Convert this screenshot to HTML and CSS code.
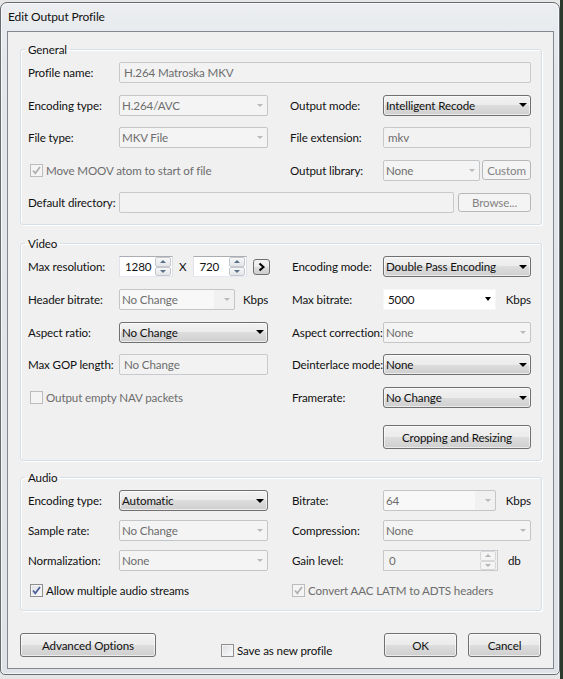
FILE: index.html
```html
<!DOCTYPE html>
<html>
  <head>
    <link rel="stylesheet" href="styles.css">
  </head>
  <body>
    <div class="window">
      <div class="titlebar">Edit Output Profile</div>
      <div class="client">

        <fieldset class="group general">
          <legend>General</legend>
          <div class="grid">
            <span class="label">Profile name:</span>
            <div class="text off span3">H.264 Matroska MKV</div>

            <span class="label">Encoding type:</span>
            <div class="combo off half">H.264/AVC</div>
            <span class="label right">Output mode:</span>
            <div class="combo">Intelligent Recode</div>

            <span class="label">File type:</span>
            <div class="combo off half">MKV File</div>
            <span class="label right">File extension:</span>
            <div class="text off">mkv</div>

            <div class="check off span2">
              <span class="box"><svg width="11" height="11" viewBox="0 0 11 11"><path d="M2 5.5 L4.3 8.3 L9 2"/></svg></span>
              Move MOOV atom to start of file
            </div>
            <span class="label right">Output library:</span>
            <div class="pair">
              <div class="combo off lib">None</div>
              <div class="btn off small">Custom</div>
            </div>

            <span class="label">Default directory:</span>
            <div class="pair span3">
              <div class="text off grow"></div>
              <div class="btn off browse">Browse...</div>
            </div>
          </div>
        </fieldset>

        <fieldset class="group video">
          <legend>Video</legend>
          <div class="grid">
            <span class="label">Max resolution:</span>
            <div class="res">
              <div class="spin">1280<span class="arrows"><i class="up"></i><i class="down"></i></span></div>
              <span class="times">X</span>
              <div class="spin">720<span class="arrows"><i class="up"></i><i class="down"></i></span></div>
              <div class="go"><svg width="9" height="10" viewBox="0 0 9 10"><path d="M2.5 1.5 L6.5 5 L2.5 8.5"/></svg></div>
            </div>
            <span class="label right">Encoding mode:</span>
            <div class="combo">Double Pass Encoding</div>

            <span class="label">Header bitrate:</span>
            <div class="unit-row">
              <div class="combo off edit hdr">No Change</div>
              <span class="unit near">Kbps</span>
            </div>
            <span class="label right">Max bitrate:</span>
            <div class="unit-row">
              <div class="ecombo">5000</div>
              <span class="unit">Kbps</span>
            </div>

            <span class="label">Aspect ratio:</span>
            <div class="combo half">No Change</div>
            <span class="label right">Aspect correction:</span>
            <div class="combo off">None</div>

            <span class="label">Max GOP length:</span>
            <div class="text off half">No Change</div>
            <span class="label right">Deinterlace mode:</span>
            <div class="combo">None</div>

            <div class="check off span2">
              <span class="box"></span>
              Output empty NAV packets
            </div>
            <span class="label right">Framerate:</span>
            <div class="combo">No Change</div>

            <div class="btn crop">Cropping and Resizing</div>
          </div>
        </fieldset>

        <fieldset class="group audio">
          <legend>Audio</legend>
          <div class="grid">
            <span class="label">Encoding type:</span>
            <div class="combo half">Automatic</div>
            <span class="label right">Bitrate:</span>
            <div class="unit-row">
              <div class="combo off edit wide">64</div>
              <span class="unit">Kbps</span>
            </div>

            <span class="label">Sample rate:</span>
            <div class="combo off half">No Change</div>
            <span class="label right">Compression:</span>
            <div class="combo off">None</div>

            <span class="label">Normalization:</span>
            <div class="combo off half">None</div>
            <span class="label right">Gain level:</span>
            <div class="unit-row">
              <div class="spin off wide">0<span class="arrows"><i class="up"></i><i class="down"></i></span></div>
              <span class="unit">db</span>
            </div>

            <div class="check span2">
              <span class="box"><svg width="11" height="11" viewBox="0 0 11 11"><path d="M2 5.5 L4.3 8.3 L9 2"/></svg></span>
              Allow multiple audio streams
            </div>
            <div class="check off span2 right">
              <span class="box"><svg width="11" height="11" viewBox="0 0 11 11"><path d="M2 5.5 L4.3 8.3 L9 2"/></svg></span>
              Convert AAC LATM to ADTS headers
            </div>
          </div>
        </fieldset>

        <div class="footer">
          <div class="btn advanced">Advanced Options</div>
          <div class="check save">
            <span class="box"></span>
            Save as new profile
          </div>
          <div class="btn ok">OK</div>
          <div class="btn cancel">Cancel</div>
        </div>

      </div>
    </div>
  </body>
</html>
```

FILE: styles.css
```css
html, body {
  margin: 0;
  height: 679px;
  overflow: hidden;
}

body {
  font-family: Lato, "Liberation Sans", sans-serif;
  font-size: 11.6px;
  letter-spacing: -0.12px;
  color: #111;
  background: linear-gradient(to right, #e6e6e6 560px, #2b3a2c 560px);
}

* {
  box-sizing: border-box;
}

/* window frame */

.window {
  width: 560px;
  height: 673px;
  margin-top: 2px;
  border: 1px solid #686b70;
  border-radius: 7px 7px 5px 5px;
  padding: 0 5px 5px 6px;
  background: linear-gradient(#eceef1, #e3e7eb 60px, #dfe3e7);
  box-shadow: inset 0 0 0 1px rgba(255, 255, 255, 0.7);
}

.titlebar {
  height: 28px;
  line-height: 28px;
  padding-left: 1px;
  font-size: 12px;
}

.client {
  height: 638px;
  border: 1px solid #828790;
  background: #f0f0f0;
  padding: 10px 11px 11px 12px;
}

/* group boxes */

.group {
  margin: 0;
  padding: 5px 10px 11px 7px;
  min-width: 0;
  border: 1px solid #d5dfe5;
  border-radius: 3px;
  box-shadow: inset 1px 1px 0 #fff, 1px 1px 0 #fff;
}

.group legend {
  padding: 0 3px;
  margin-left: -3px;
  line-height: 15px;
}

.video {
  margin-top: 11px;
}

.audio {
  margin-top: 9px;
  padding-bottom: 9px;
}

.grid {
  display: grid;
  grid-template-columns: 91px 170px 94px 148px;
  grid-auto-rows: 21px;
  align-items: center;
}

.general .grid {
  row-gap: 11.5px;
}

.video .grid {
  row-gap: 11.75px;
  grid-template-rows: repeat(5, 21px) 29.25px;
}

.audio .grid {
  row-gap: 9px;
}

.label {
  white-space: nowrap;
}

.general .label.right {
  padding-left: 1px;
}

.video .label.right,
.audio .label.right,
.audio .check.right {
  padding-left: 3px;
}

.span2 {
  grid-column: span 2;
}

.span3 {
  grid-column: span 3;
}

.half {
  width: 149px;
}

.pair {
  display: flex;
  align-items: center;
  gap: 2px;
}

.pair .grow {
  flex: 1;
}

.pair .browse {
  width: 73px;
  height: 19px;
  margin-left: 2px;
}

.pair .lib {
  width: 97px;
}

.pair .small {
  width: 49px;
  height: 20px;
}

/* controls */

.combo,
.ecombo,
.text,
.spin {
  display: flex;
  align-items: center;
  height: 21px;
  white-space: nowrap;
  overflow: hidden;
}

.combo {
  border: 1px solid #707070;
  border-radius: 3px;
  padding-left: 2px;
  background: linear-gradient(#f2f2f2, #ebebeb 50%, #dddddd 50%, #cfcfcf);
  box-shadow: inset 0 0 0 1px rgba(255, 255, 255, 0.6);
}

.combo::after,
.ecombo::after {
  content: "";
  margin-left: auto;
  margin-right: 3px;
  border-left: 4px solid transparent;
  border-right: 4px solid transparent;
  border-top: 4px solid #000;
}

.combo.off {
  border-color: #c3c6c9;
  border-radius: 2px;
  background: #f4f4f4;
  box-shadow: none;
  color: #6d6d6d;
}

.combo.off::after {
  margin-right: 4px;
  border-left-width: 3.5px;
  border-right-width: 3.5px;
  border-top: 3.5px solid #b9b9b9;
}

.combo.edit {
  background: linear-gradient(to right, #f8f8f8 calc(100% - 20px), #f1f1f1 calc(100% - 20px));
}

.combo.hdr {
  width: 116px;
}

.combo.wide,
.spin.wide,
.ecombo {
  width: 115px;
}

.ecombo {
  background: #fff;
  border: 1px solid #f7f7f7;
  padding-left: 4px;
}

.ecombo::after {
  margin-right: 4px;
  border-left-width: 3.5px;
  border-right-width: 3.5px;
}

.text {
  border: 1px solid #abadb3;
  border-radius: 2px;
  padding-left: 4px;
  background: #fff;
}

.text.off {
  border-color: #c7c9cc;
  background: #f2f2f2;
  color: #6d6d6d;
}

.unit-row {
  display: flex;
  align-items: center;
}

.unit {
  margin-left: 10px;
}

.unit.near {
  margin-left: 8px;
}

.res {
  display: flex;
  align-items: center;
}

.times {
  margin: 0 7px 0 6px;
}

.spin {
  width: 54px;
  padding: 0 1px 0 5px;
  border: 1px solid;
  border-color: #abadb3 #dbdfe6 #e3e9ef #e2e3ea;
  background: #fff;
}

.spin .arrows {
  margin-left: auto;
  display: flex;
  flex-direction: column;
  width: 16px;
  height: 19px;
}

.spin .arrows i {
  flex: 1;
  display: flex;
  align-items: center;
  justify-content: center;
  border: 1px solid #c5c9cf;
  border-radius: 2px;
  background: linear-gradient(#f7f7f7, #e3e5e8);
}

.spin .arrows i::before {
  content: "";
  border-left: 3px solid transparent;
  border-right: 3px solid transparent;
}

.spin .arrows .up::before {
  border-bottom: 3px solid #5b6f88;
}

.spin .arrows .down::before {
  border-top: 3px solid #5b6f88;
}

.spin.off {
  border-color: #c7c9cc;
  background: #f2f2f2;
  color: #6d6d6d;
}

.spin.off .arrows i {
  border-color: #d6d8da;
  background: #f4f4f4;
}

.spin.off .arrows .up::before {
  border-bottom-color: #b4b4b4;
}

.spin.off .arrows .down::before {
  border-top-color: #b4b4b4;
}

.go {
  margin-left: 6px;
  width: 17px;
  height: 16px;
  display: flex;
  align-items: center;
  justify-content: center;
  border: 1px solid #707070;
  border-radius: 3px;
  background: linear-gradient(#f2f2f2, #ebebeb 50%, #dddddd 50%, #cfcfcf);
}

.go path {
  fill: none;
  stroke: #000;
  stroke-width: 2;
}

/* buttons */

.btn {
  display: flex;
  align-items: center;
  justify-content: center;
  height: 24px;
  border: 1px solid #707070;
  border-radius: 3px;
  background: linear-gradient(#f2f2f2, #ebebeb 50%, #dddddd 50%, #cfcfcf);
  box-shadow: inset 0 0 0 1px rgba(255, 255, 255, 0.6);
  white-space: nowrap;
}

.btn.off {
  border-color: #b5b9bc;
  background: #f4f4f4;
  box-shadow: none;
  color: #838383;
}

.btn.crop {
  grid-column: 4;
  align-self: end;
}

/* check boxes */

.check {
  display: flex;
  align-items: center;
  gap: 3px;
  padding-left: 2px;
  white-space: nowrap;
}

.check .box {
  width: 13px;
  height: 13px;
  display: flex;
  align-items: center;
  justify-content: center;
  border: 1px solid #8e8f8f;
  background: linear-gradient(135deg, #dcdee2, #fbfbfb);
  box-shadow: inset 0 0 0 1px #f4f4f4;
}

.check .box path {
  fill: none;
  stroke: #4a5f97;
  stroke-width: 1.7;
}

.check.off {
  color: #6d6d6d;
}

.check.off .box {
  border-color: #bcbcbc;
  background: #f4f4f4;
}

.check.off .box path {
  stroke: #b0b0b0;
}

/* footer */

.footer {
  display: flex;
  align-items: flex-end;
  margin-top: 22px;
  padding-right: 1px;
}

.footer .advanced {
  width: 136px;
}

.footer .save {
  margin-left: 63px;
  margin-right: auto;
  line-height: 13px;
}

.footer .ok,
.footer .cancel {
  width: 73px;
}

.footer .cancel {
  margin-left: 11px;
}
```
